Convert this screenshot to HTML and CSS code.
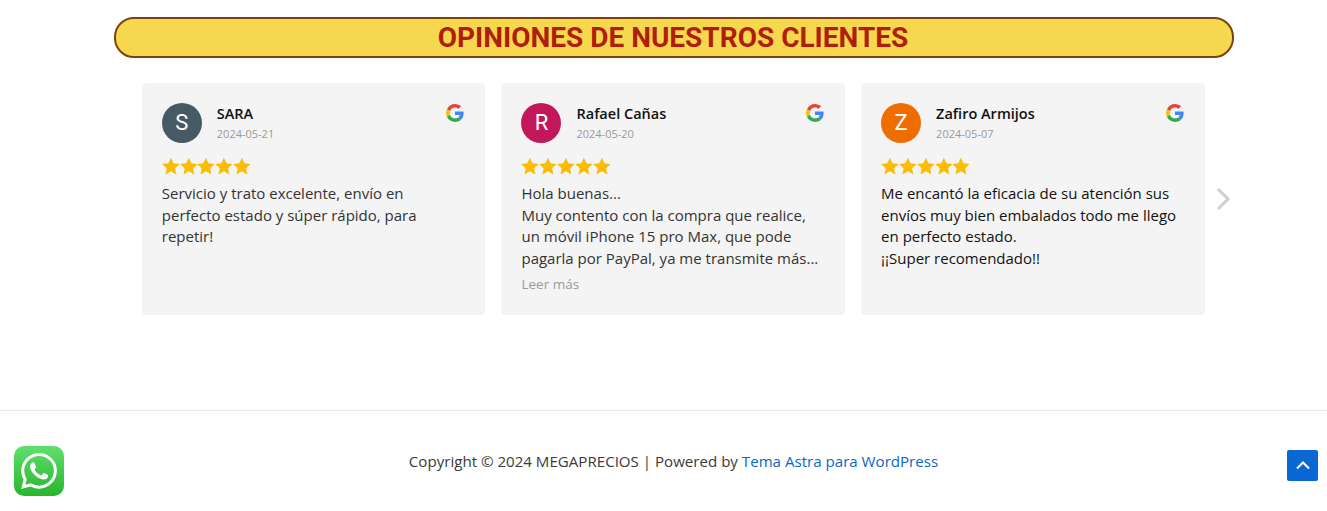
FILE: index.html
```html
<!DOCTYPE html>

<html lang="es">

<head>
    <meta charset="UTF-8">
    <meta name="viewport" content="width=device-width, initial-scale=1.0">
    <title>Opiniones</title>
    <link rel="stylesheet" href="styles.css">
</head>

<body>
    <svg class="svg-defs" width="0" height="0">
        <defs>
            <symbol id="g-logo" viewBox="0 0 48 48">
                <path fill="#EA4335" d="M24 9.5c3.54 0 6.71 1.22 9.21 3.6l6.85-6.85C35.9 2.38 30.47 0 24 0 14.62 0 6.51 5.38 2.56 13.22l7.98 6.19C12.43 13.72 17.74 9.5 24 9.5z"/>
                <path fill="#4285F4" d="M46.98 24.55c0-1.57-.15-3.09-.38-4.55H24v9.02h12.94c-.58 2.96-2.26 5.48-4.78 7.18l7.73 6c4.51-4.18 7.09-10.36 7.09-17.65z"/>
                <path fill="#FBBC05" d="M10.53 28.59c-.48-1.45-.76-2.99-.76-4.59s.27-3.14.76-4.59l-7.98-6.19C.92 16.46 0 20.12 0 24c0 3.88.92 7.54 2.56 10.78l7.97-6.19z"/>
                <path fill="#34A853" d="M24 48c6.48 0 11.93-2.13 15.89-5.81l-7.73-6c-2.15 1.45-4.92 2.3-8.16 2.3-6.26 0-11.57-4.22-13.47-9.91l-7.98 6.19C6.51 42.62 14.62 48 24 48z"/>
            </symbol>
            <symbol id="star" viewBox="0 0 24 24">
                <path d="M12 .8l3.5 7.6 8.3 1-6.1 5.7 1.6 8.2L12 19.2l-7.3 4.1 1.6-8.2L.2 9.4l8.3-1z"/>
            </symbol>
        </defs>
    </svg>

    <main class="reviews">
        <h2 class="reviews-title">OPINIONES DE NUESTROS CLIENTES</h2>

        <div class="carousel">
            <article class="card">
                <div class="card-head">
                    <span class="avatar avatar-slate">S</span>
                    <div class="who">
                        <span class="name">SARA</span>
                        <span class="date">2024-05-21</span>
                    </div>
                    <svg class="g-logo"><use href="#g-logo"></use></svg>
                </div>
                <div class="stars">
                    <svg><use href="#star"></use></svg><svg><use href="#star"></use></svg><svg><use href="#star"></use></svg><svg><use href="#star"></use></svg><svg><use href="#star"></use></svg>
                </div>
                <p class="text">Servicio y trato excelente, envío en perfecto estado y súper rápido, para repetir!</p>
            </article>

            <article class="card">
                <div class="card-head">
                    <span class="avatar avatar-pink">R</span>
                    <div class="who">
                        <span class="name">Rafael Cañas</span>
                        <span class="date">2024-05-20</span>
                    </div>
                    <svg class="g-logo"><use href="#g-logo"></use></svg>
                </div>
                <div class="stars">
                    <svg><use href="#star"></use></svg><svg><use href="#star"></use></svg><svg><use href="#star"></use></svg><svg><use href="#star"></use></svg><svg><use href="#star"></use></svg>
                </div>
                <p class="text">Hola buenas...<br>Muy contento con la compra que realice, un móvil iPhone 15 pro Max, que pode pagarla por PayPal, ya me transmite más...</p>
                <a class="more" href="#">Leer más</a>
            </article>

            <article class="card">
                <div class="card-head">
                    <span class="avatar avatar-orange">Z</span>
                    <div class="who">
                        <span class="name">Zafiro Armijos</span>
                        <span class="date">2024-05-07</span>
                    </div>
                    <svg class="g-logo"><use href="#g-logo"></use></svg>
                </div>
                <div class="stars">
                    <svg><use href="#star"></use></svg><svg><use href="#star"></use></svg><svg><use href="#star"></use></svg><svg><use href="#star"></use></svg><svg><use href="#star"></use></svg>
                </div>
                <p class="text text-dark">Me encantó la eficacia de su atención sus envíos muy bien embalados todo me llego en perfecto estado.<br>¡¡Super recomendado!!</p>
            </article>

            <svg class="next" viewBox="0 0 16 24" aria-label="Siguiente">
                <path d="M3 2l10 10L3 22" fill="none" stroke="#cfcfcf" stroke-width="3"/>
            </svg>
        </div>
    </main>

    <footer class="site-footer">
        Copyright © 2024 MEGAPRECIOS | Powered by&nbsp;<a href="#">Tema Astra para WordPress</a>
    </footer>

    <a class="whatsapp" href="#" aria-label="WhatsApp">
        <svg viewBox="0 0 24 24">
            <path fill="#fff" d="M17.472 14.382c-.297-.149-1.758-.867-2.03-.967-.273-.099-.471-.148-.67.15-.197.297-.767.966-.94 1.164-.173.199-.347.223-.644.075-.297-.15-1.255-.463-2.39-1.475-.883-.788-1.48-1.761-1.653-2.059-.173-.297-.018-.458.13-.606.134-.133.298-.347.446-.52.149-.174.198-.298.298-.497.099-.198.05-.371-.025-.52-.075-.149-.669-1.612-.916-2.207-.242-.579-.487-.5-.669-.51-.173-.008-.371-.01-.57-.01-.198 0-.52.074-.792.372-.272.297-1.04 1.016-1.04 2.479 0 1.462 1.065 2.875 1.213 3.074.149.198 2.096 3.2 5.077 4.487.709.306 1.262.489 1.694.625.712.227 1.36.195 1.871.118.571-.085 1.758-.719 2.006-1.413.248-.694.248-1.289.173-1.413-.074-.124-.272-.198-.57-.347m-5.421 7.403h-.004a9.87 9.87 0 01-5.031-1.378l-.361-.214-3.741.982.998-3.648-.235-.374a9.86 9.86 0 01-1.51-5.26c.001-5.45 4.436-9.884 9.888-9.884 2.64 0 5.122 1.03 6.988 2.898a9.825 9.825 0 012.893 6.994c-.003 5.45-4.437 9.884-9.885 9.884m8.413-18.297A11.815 11.815 0 0012.05 0C5.495 0 .16 5.335.157 11.892c0 2.096.547 4.142 1.588 5.945L.057 24l6.305-1.654a11.882 11.882 0 005.683 1.448h.005c6.554 0 11.89-5.335 11.893-11.893a11.821 11.821 0 00-3.48-8.413z"/>
        </svg>
    </a>

    <a class="to-top" href="#" aria-label="Subir">
        <svg viewBox="0 0 14 9"><path d="M1 7.5l6-6 6 6" fill="none" stroke="#fff" stroke-width="2"/></svg>
    </a>
</body>

</html>
```

FILE: styles.css
```css
body {
    font-family: 'Open Sans', sans-serif;
    margin: 0;
    height: 511px;
    overflow: hidden;
    position: relative;
    background-color: #ffffff;
    color: #3a3a3a;
}

.svg-defs {
    position: absolute;
}

.reviews {
    height: 410px;
    box-sizing: border-box;
    padding-top: 17px;
}

.reviews-title {
    box-sizing: border-box;
    width: 1120px;
    height: 41px;
    margin: 0 0 25px 114px;
    padding-right: 2px;
    border: 2px solid #80410a;
    border-radius: 20px;
    background-color: #f6d84f;
    color: #b01e0a;
    font-family: Roboto, sans-serif;
    font-size: 28px;
    font-weight: 700;
    line-height: 37px;
    text-align: center;
}

.carousel {
    position: relative;
    display: grid;
    grid-template-columns: repeat(3, 343.67px);
    gap: 16px;
    margin-left: 141.8px;
}

.card {
    box-sizing: border-box;
    height: 232px;
    padding: 20px;
    background-color: #f4f4f4;
    border-radius: 4px;
}

.card-head {
    display: flex;
    align-items: flex-start;
    height: 40px;
}

.avatar {
    flex: none;
    width: 40px;
    height: 40px;
    border-radius: 50%;
    color: #ffffff;
    font-family: Roboto, sans-serif;
    font-size: 22px;
    line-height: 40px;
    text-align: center;
}

.avatar-slate {
    background-color: #455a64;
}

.avatar-pink {
    background-color: #c2185b;
}

.avatar-orange {
    background-color: #ef6c00;
}

.who {
    display: flex;
    flex-direction: column;
    flex: 1;
    margin-left: 15px;
}

.name {
    font-size: 14.5px;
    font-weight: 600;
    line-height: 22px;
    color: #111111;
}

.date {
    font-size: 11px;
    line-height: 17px;
    color: #999999;
}

.g-logo {
    flex: none;
    width: 18px;
    height: 18px;
    margin-top: 1px;
    margin-right: 1px;
}

.stars {
    display: flex;
    height: 18px;
    margin-top: 14px;
    fill: #fbbc04;
}

.stars svg {
    width: 17.8px;
    height: 18px;
}

.text {
    margin: 8px 0 0;
    font-size: 15px;
    line-height: 21.6px;
    color: #333333;
}

.text-dark {
    color: #111111;
}

.more {
    display: block;
    margin-top: 5px;
    font-size: 13.5px;
    line-height: 20px;
    color: #999999;
    text-decoration: none;
}

.next {
    position: absolute;
    left: 1073px;
    top: 104px;
    width: 16px;
    height: 24px;
}

.site-footer {
    display: flex;
    justify-content: center;
    box-sizing: border-box;
    height: 101px;
    padding-top: 39px;
    padding-left: 20px;
    border-top: 1px solid #e6e6e6;
    font-size: 15.1px;
    line-height: 22px;
}

.site-footer a {
    color: #0a66cc;
    text-decoration: none;
}

.whatsapp {
    position: absolute;
    left: 14px;
    top: 446px;
    display: flex;
    align-items: center;
    justify-content: center;
    width: 50px;
    height: 50px;
    border-radius: 10px;
    background: linear-gradient(#5fe06d, #28b52e);
}

.whatsapp svg {
    width: 36px;
    height: 36px;
}

.to-top {
    position: absolute;
    left: 1287px;
    top: 450px;
    display: flex;
    align-items: center;
    justify-content: center;
    width: 31px;
    height: 31px;
    border-radius: 2px;
    background-color: #0a68d4;
}

.to-top svg {
    width: 14px;
    height: 9px;
}
```
